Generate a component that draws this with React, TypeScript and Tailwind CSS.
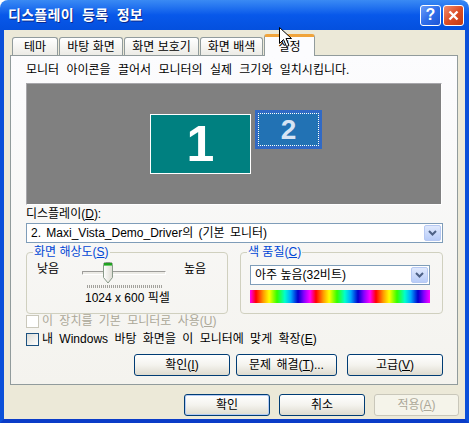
import React from 'react';

const font = "font-['Liberation_Sans','Noto_Sans_CJK_KR',sans-serif]";

const tabs = [
  { label: '테마', w: 'w-[46px]' },
  { label: '바탕 화면', w: 'w-[64px]' },
  { label: '화면 보호기', w: 'w-[75px]' },
  { label: '화면 배색', w: 'w-[63px]' },
];

const Chevron = () => (
  <svg width="9" height="6" viewBox="0 0 9 6">
    <path d="M1 1 L4.5 4.5 L8 1" fill="none" stroke="#4d6185" strokeWidth="2" />
  </svg>
);

const DropButton = () => (
  <div className="w-[17px] h-full rounded-[2px] border border-[#b7c9f3] bg-gradient-to-b from-[#e0e9fd] to-[#b8ccf8] flex items-center justify-center">
    <Chevron />
  </div>
);

const XpButton = ({
  children,
  className,
  disabled,
  primary,
}: {
  children: React.ReactNode;
  className: string;
  disabled?: boolean;
  primary?: boolean;
}) => (
  <div
    className={`${className} flex items-center justify-center rounded-[3px] border ${
      disabled
        ? 'border-[#c9c7ba] bg-[#f5f4ea] text-[#aca899]'
        : 'border-[#003c74] bg-gradient-to-b from-white via-[#f4f3ee] to-[#dedbcf] text-black'
    } ${primary ? 'shadow-[inset_0_0_0_1px_#b4cbf4]' : ''}`}
  >
    {children}
  </div>
);

const CheckBox = ({ disabled }: { disabled?: boolean }) => (
  <div
    className={`w-[13px] h-[13px] border ${
      disabled
        ? 'border-[#cac8bb] bg-white'
        : 'border-[#1c5180] bg-gradient-to-br from-[#dcdcd7] to-white'
    }`}
  />
);

export default function App() {
  return (
    <div className={`relative w-[469px] h-[423px] flex flex-col ${font} text-[12px] text-black select-none`}>
      {/* title bar */}
      <div className="h-[30px] shrink-0 rounded-t-[8px] bg-gradient-to-b from-[#3a8af4] via-[#0858ea] to-[#0450de] flex items-center pl-[8px] pr-[5px]">
        <span className="text-white font-bold text-[14px] [word-spacing:4px] tracking-[0.3px] [text-shadow:1px_1px_0_#0b2a8e]">
          디스플레이 등록 정보
        </span>
        <div className="ml-auto flex gap-[2px]">
          <div className="w-[21px] h-[21px] rounded-[3px] border border-white bg-gradient-to-br from-[#6b9cf8] via-[#2f6eea] to-[#1d55d6] flex items-center justify-center text-white font-bold text-[16px] leading-none">
            ?
          </div>
          <div className="w-[21px] h-[21px] rounded-[3px] border border-white bg-gradient-to-br from-[#f08a6c] via-[#dd4e26] to-[#c23a12] flex items-center justify-center">
            <svg width="11" height="11" viewBox="0 0 11 11">
              <path d="M1.5 1.5 L9.5 9.5 M9.5 1.5 L1.5 9.5" stroke="white" strokeWidth="2.4" />
            </svg>
          </div>
        </div>
      </div>

      {/* body */}
      <div className="flex-1 flex flex-col bg-[#ece9d8] border-x-[4px] border-b-[4px] border-x-[#0b50d9] border-b-[#0a3cc8]">
        {/* tabs */}
        <div className="flex items-end h-[25px] pl-[8px] gap-[1px]">
          {tabs.map((t) => (
            <div
              key={t.label}
              className={`${t.w} h-[18px] rounded-t-[3px] border border-b-0 border-[#919b9c] bg-gradient-to-b from-white to-[#ecebe6] flex items-center justify-center whitespace-nowrap`}
            >
              {t.label}
            </div>
          ))}
          <div className="relative z-10 w-[51px] h-[22px] -mb-[1px] rounded-t-[3px] border-x border-[#919b9c] border-t-[3px] border-t-[#f0a43c] bg-[#fcfcfe] flex items-center justify-center">
            설정
          </div>
        </div>

        {/* panel */}
        <div className="ml-[6px] w-[448px] h-[330px] border border-[#919b9c] bg-gradient-to-b from-[#fcfcfe] to-[#f4f3ee] flex flex-col pl-[15px] pt-[7px]">
          <div className="h-[15px] leading-[15px] [word-spacing:4px] whitespace-nowrap">
            모니터 아이콘을 끌어서 모니터의 실제 크기와 일치시킵니다.
          </div>

          <div className="relative mt-[5px] w-[416px] h-[122px] bg-[#808080] border border-t-[#a7a6aa] border-l-[#a7a6aa] border-b-white border-r-white">
            <div className="absolute left-[123px] top-[30px] w-[101px] h-[60px] bg-[#008080] border border-white flex items-center justify-center">
              <span className="font-['Liberation_Sans',sans-serif] font-bold text-[50px] leading-none text-white">1</span>
            </div>
            <div className="absolute left-[228px] top-[26px] w-[67px] h-[39px] bg-[#316ac5] p-[3px]">
              <div className="w-full h-full border border-dotted border-white bg-[#2272b4] flex items-center justify-center">
                <span className="font-['Liberation_Sans',sans-serif] font-bold text-[28px] leading-none text-[#d6e4f4]">2</span>
              </div>
            </div>
          </div>

          <div className="mt-[2px] h-[15px] leading-[15px]">
            디스플레이(<u>D</u>):
          </div>
          <div className="mt-[1px] w-[417px] h-[20px] border border-[#7f9db9] bg-white flex items-center p-[1px]">
            <span className="flex-1 pl-[3px] whitespace-nowrap [word-spacing:2px]">
              2. Maxi_Vista_Demo_Driver의 (기본 모니터)
            </span>
            <DropButton />
          </div>

          {/* group boxes */}
          <div className="mt-[2px] flex gap-[12px]">
            <fieldset className="w-[202px] h-[69px] border border-[#d0d0bf] rounded-[4px] pl-[10px]">
              <legend className="ml-[-4px] px-[1px] h-[15px] leading-[15px] text-[#0046d5]">
                화면 해상도(<u>S</u>)
              </legend>
              <div className="flex pt-[2px]">
                <span className="w-[45px] h-[15px] leading-[15px]">낮음</span>
                <div className="w-[84px] flex flex-col">
                  <div className="relative h-[22px]">
                    <div className="absolute left-0 right-0 top-[9px] h-[4px] border border-t-[#9d9c99] border-l-[#9d9c99] border-b-white border-r-white bg-[#ecebe6] rounded-[1px]" />
                    <svg className="absolute left-[20px] top-0" width="12" height="22" viewBox="0 0 12 22">
                      <defs>
                        <linearGradient id="th" x1="0" y1="0" x2="1" y2="0">
                          <stop offset="0" stopColor="#ffffff" />
                          <stop offset="1" stopColor="#dcdbd2" />
                        </linearGradient>
                      </defs>
                      <path d="M1.5 2.5 Q1.5 0.5 3.5 0.5 L8.5 0.5 Q10.5 0.5 10.5 2.5 L10.5 15.5 L6 21 L1.5 15.5 Z" fill="url(#th)" stroke="#8a9a8a" />
                      <path d="M2 1.5 L10 1.5 M2 2.5 L10 2.5" stroke="#21a121" />
                      <path d="M2 3.5 L10 3.5" stroke="#6ccc6c" />
                    </svg>
                  </div>
                  <div className="mt-[1px] ml-[5px] w-[75px] h-[3px] bg-[repeating-linear-gradient(90deg,#a3a29d_0_1px,transparent_1px_2px)]" />
                  <div className="mt-[3px] ml-[3px] h-[15px] leading-[15px] whitespace-nowrap">1024 x 600 픽셀</div>
                </div>
                <span className="ml-[18px] h-[15px] leading-[15px]">높음</span>
              </div>
            </fieldset>

            <fieldset className="w-[203px] h-[69px] border border-[#d0d0bf] rounded-[4px] pl-[9px]">
              <legend className="ml-[-3px] px-[1px] h-[15px] leading-[15px] text-[#0046d5]">
                색 품질(<u>C</u>)
              </legend>
              <div className="mt-[5px] w-[180px] h-[20px] border border-[#7f9db9] bg-white flex items-center p-[1px]">
                <span className="flex-1 pl-[3px] whitespace-nowrap">아주 높음(32비트)</span>
                <DropButton />
              </div>
              <div className="mt-[5px] w-[180px] h-[13px] flex">
                {[0, 1, 2].map((i) => (
                  <div
                    key={i}
                    className="flex-1 bg-[linear-gradient(90deg,#ff00ff,#ff0000_10%,#ff9900_22%,#ffff00_32%,#33ff00_45%,#00ffcc_58%,#00aaff_68%,#0000cc_80%,#8800ff_90%,#ff00ff)]"
                  />
                ))}
              </div>
            </fieldset>
          </div>

          {/* checkboxes */}
          <div className="flex items-center gap-[3px] h-[15px] text-[#aca899] [word-spacing:3px]">
            <CheckBox disabled />
            <span className="leading-[15px]">이 장치를 기본 모니터로 사용(<u>U</u>)</span>
          </div>
          <div className="mt-[3px] flex items-center gap-[3px] h-[15px] [word-spacing:3px]">
            <CheckBox />
            <span className="leading-[15px]">내 Windows 바탕 화면을 이 모니터에 맞게 확장(<u>E</u>)</span>
          </div>

          <div className="mt-[7px] pr-[14px] flex justify-end h-[22px]">
            <XpButton className="w-[96px] h-[22px]">
              확인(<u>I</u>)
            </XpButton>
            <XpButton className="ml-[6px] w-[101px] h-[22px]">
              <span className="[word-spacing:2px]">문제 해결(<u>T</u>)...</span>
            </XpButton>
            <XpButton className="ml-[10px] w-[96px] h-[22px]">
              고급(<u>V</u>)
            </XpButton>
          </div>
        </div>

        {/* dialog buttons */}
        <div className="mt-[9px] pr-[6px] flex justify-end gap-[9px]">
          <XpButton className="w-[86px] h-[22px]" primary>
            확인
          </XpButton>
          <XpButton className="w-[86px] h-[22px]">취소</XpButton>
          <XpButton className="w-[85px] h-[22px]" disabled>
            적용(<u>A</u>)
          </XpButton>
        </div>
      </div>

      {/* mouse pointer */}
      <svg className="absolute z-20 left-[279px] top-[27px]" width="14" height="21" viewBox="0 0 14 21">
        <path d="M0.5 0.5 L0.5 16.5 L4.5 12.5 L7.5 19.5 L10 18.5 L7 11.5 L12.5 11.5 Z" fill="white" stroke="black" strokeWidth="1" />
      </svg>
    </div>
  );
}
